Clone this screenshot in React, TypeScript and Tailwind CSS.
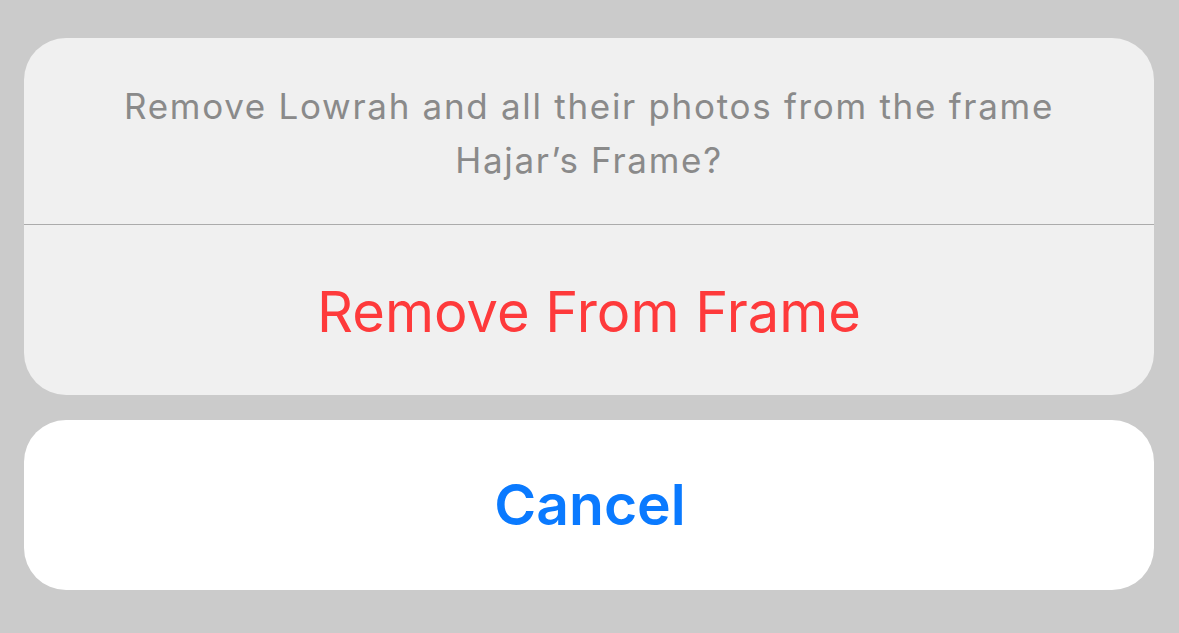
export default function App() {
  return (
    <div
      className="min-h-[633px] w-full bg-[#cbcbcb] px-[24px] pt-[38px]"
      style={{ fontFamily: 'Inter, "Noto Sans", sans-serif' }}
    >
      {/* Action sheet group */}
      <div className="w-[1130px] overflow-hidden rounded-[42px] bg-[#f0f0f0]">
        <div className="flex h-[186px] flex-col items-center justify-center px-[30px] pt-[4px] text-center text-[35px] leading-[54px] tracking-[1.7px] text-[#8a8a8a]">
          <p>Remove Lowrah and all their photos from the frame</p>
          <p>Hajar’s Frame?</p>
        </div>
        <div className="h-px bg-[#ababab]" />
        <button className="flex h-[170px] w-full items-center justify-center pt-[4px] text-[56px] text-[#fe3a3b]">
          Remove From Frame
        </button>
      </div>

      {/* Cancel */}
      <button className="mt-[25px] flex h-[170px] w-[1130px] items-center justify-center rounded-[42px] bg-white pl-[2px] text-[57px] font-semibold text-[#0a7aff]">
        Cancel
      </button>
    </div>
  );
}
